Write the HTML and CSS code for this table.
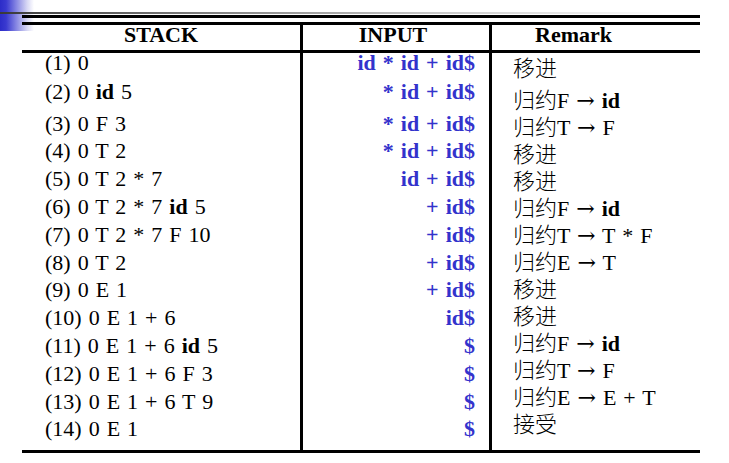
FILE: index.html
```html
<!DOCTYPE html>
<html lang="en">
<head>
<meta charset="utf-8">
<title>LR parse</title>
<link rel="stylesheet" href="styles.css">
</head>
<body>
<div class="page">
  <div class="rule"></div>
  <div class="table">
    <div class="row head">
      <div class="cell c1">STACK</div>
      <div class="cell c2">INPUT</div>
      <div class="cell c3">Remark</div>
    </div>
    <div class="row body">
      <div class="cell c1">
        <div class="line first">(1) 0</div>
        <div class="line g1">(2) 0 <b>id</b> 5</div>
        <div class="line g4">(3) 0 F 3</div>
        <div class="line">(4) 0 T 2</div>
        <div class="line">(5) 0 T 2 * 7</div>
        <div class="line">(6) 0 T 2 * 7 <b>id</b> 5</div>
        <div class="line">(7) 0 T 2 * 7 F 10</div>
        <div class="line">(8) 0 T 2</div>
        <div class="line">(9) 0 E 1</div>
        <div class="line">(10) 0 E 1 + 6</div>
        <div class="line">(11) 0 E 1 + 6 <b>id</b> 5</div>
        <div class="line">(12) 0 E 1 + 6 F 3</div>
        <div class="line">(13) 0 E 1 + 6 T 9</div>
        <div class="line">(14) 0 E 1</div>
      </div>
      <div class="cell c2">
        <div class="line first">id * id + id$</div>
        <div class="line g1">* id + id$</div>
        <div class="line g4">* id + id$</div>
        <div class="line">* id + id$</div>
        <div class="line">id + id$</div>
        <div class="line">+ id$</div>
        <div class="line">+ id$</div>
        <div class="line">+ id$</div>
        <div class="line">+ id$</div>
        <div class="line">id$</div>
        <div class="line">$</div>
        <div class="line">$</div>
        <div class="line">$</div>
        <div class="line">$</div>
      </div>
      <div class="cell c3">
        <div class="rline"><span class="cjk" lang="zh">移进</span></div>
        <div class="rline g5"><span class="cjk" lang="zh">归约</span>F <span class="arr">→</span> <b>id</b></div>
        <div class="rline"><span class="cjk" lang="zh">归约</span>T <span class="arr">→</span> F</div>
        <div class="rline"><span class="cjk" lang="zh">移进</span></div>
        <div class="rline"><span class="cjk" lang="zh">移进</span></div>
        <div class="rline"><span class="cjk" lang="zh">归约</span>F <span class="arr">→</span> <b>id</b></div>
        <div class="rline"><span class="cjk" lang="zh">归约</span>T <span class="arr">→</span> T * F</div>
        <div class="rline"><span class="cjk" lang="zh">归约</span>E <span class="arr">→</span> T</div>
        <div class="rline"><span class="cjk" lang="zh">移进</span></div>
        <div class="rline"><span class="cjk" lang="zh">移进</span></div>
        <div class="rline"><span class="cjk" lang="zh">归约</span>F <span class="arr">→</span> <b>id</b></div>
        <div class="rline"><span class="cjk" lang="zh">归约</span>T <span class="arr">→</span> F</div>
        <div class="rline"><span class="cjk" lang="zh">归约</span>E <span class="arr">→</span> E + T</div>
        <div class="rline"><span class="cjk" lang="zh">接受</span></div>
      </div>
    </div>
  </div>
</div>
</body>
</html>
```

FILE: styles.css
```css
html, body {
  margin: 0;
  padding: 0;
  background: #fff;
}

.page {
  width: 729px;
  height: 463px;
  overflow: hidden;
  box-sizing: border-box;
  padding-top: 15px;
  font-family: "Liberation Serif", "Times New Roman", serif;
  font-size: 22px;
  font-weight: normal;
  word-spacing: 1.5px;
  color: #000;
  background:
    linear-gradient(to right, #3a3a3a 0%, #8a8a8a 35%, #c8c8c8 65%, #f2f2f2 92%, #fff 100%) 0 12px / 667px 2px no-repeat,
    linear-gradient(to right, #2c2cc8 0%, #3a3ad0 18%, #8c8ce4 50%, #d8d8f4 80%, #fff 100%) 0 0 / 34px 31px no-repeat,
    #fff;
}

.rule {
  margin-left: 22px;
  width: 678px;
  height: 3px;
  background: #000;
  margin-bottom: 4px;
}

.table {
  margin-left: 22px;
  width: 678px;
  border-top: 3px solid #000;
  border-bottom: 3px solid #000;
}

.row {
  display: grid;
  grid-template-columns: 281px 189px 208px;
}

.cell {
  box-sizing: border-box;
  min-width: 0;
}

.c1, .c2 {
  border-right: 3px solid #000;
}

.head {
  border-bottom: 3px solid #000;
}

.head .cell {
  height: 25px;
  line-height: 20px;
  padding-bottom: 5px;
  font-weight: bold;
}

.head .c1, .head .c2 {
  text-align: center;
}

.head .c2 {
  padding-right: 6px;
}

.head .c3 {
  padding-left: 43px;
}

.body {
  height: 397px;
}

.body .c1 {
  padding-left: 23px;
  white-space: nowrap;
}

.body .c2 {
  padding-right: 14px;
  text-align: right;
  color: #3333cc;
  font-weight: bold;
  white-space: nowrap;
}

.body .c3 {
  padding-left: 21px;
  white-space: nowrap;
}

.line {
  line-height: 27.8px;
  height: 27.8px;
}

.line.first {
  margin-top: -4px;
}

.line.g1 {
  margin-top: 1px;
}

.line.g4 {
  margin-top: 4px;
}

.rline {
  line-height: 27px;
  height: 27px;
}

.rline.g5 {
  margin-top: 5px;
}

.cjk {
  font-family: "Noto Sans CJK SC", sans-serif;
  font-weight: 300;
  line-height: 27px;
}

.arr {
  font-family: "DejaVu Serif", "Liberation Serif", serif;
  font-size: 22px;
}
```
